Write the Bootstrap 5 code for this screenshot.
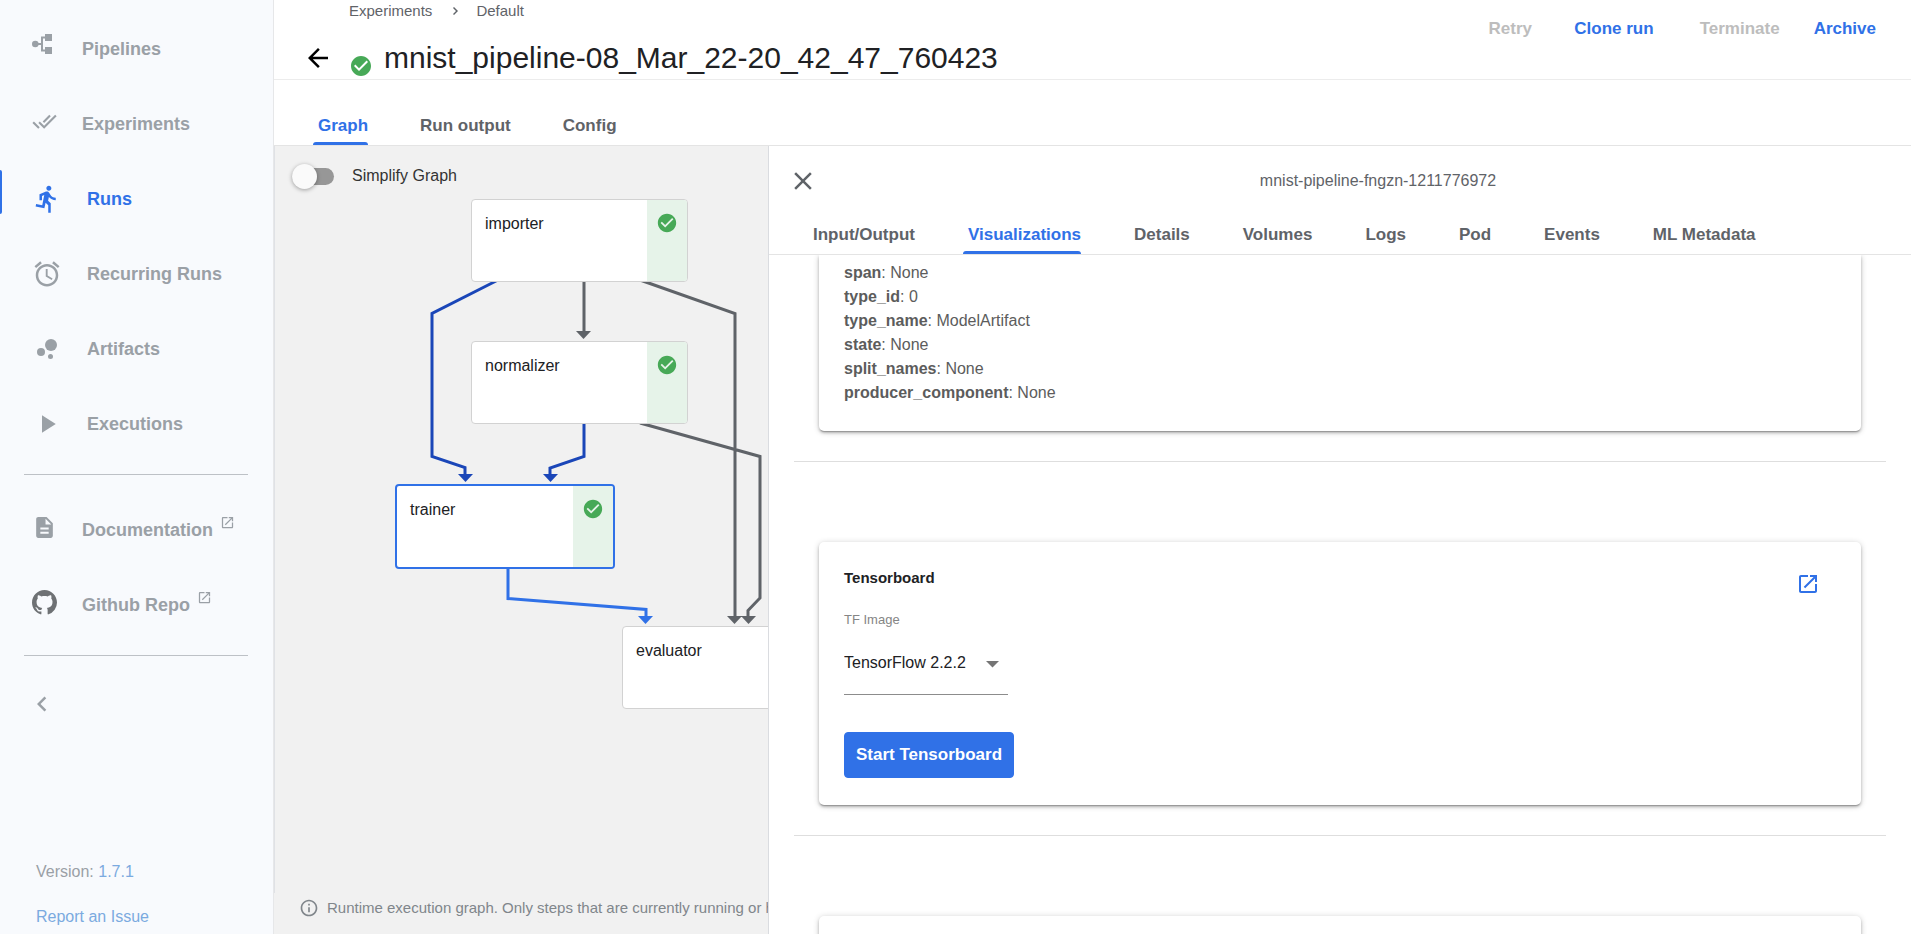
<!DOCTYPE html>
<html lang="en">
<head>
<meta charset="utf-8">
<meta name="viewport" content="width=device-width, initial-scale=1">
<title>Kubeflow Pipelines</title>
<link href="https://cdn.jsdelivr.net/npm/bootstrap@5.3.0/dist/css/bootstrap.min.css" rel="stylesheet">
<style>
  :root { --accent: #3071e7; --ink: #5f6368; --mute: #9aa0a6; --line: #e4e4e4; --ok: #47a957; }
  body { font-family: "Liberation Sans", Arial, sans-serif; font-size: 16px; line-height: 24px; color: #202124; }
  svg { display: block; flex: none; }
  .icon { fill: currentColor; }
  .ok-icon { fill: var(--ok); }

  /* side navigation */
  .side { width: 274px; background: #f8fafd; border-right: 1px solid #e6e7e9; padding-top: 11px; }
  .side-link { height: 75px; padding-left: 32px; gap: 25px; color: var(--mute); font-size: 18px; font-weight: 700; text-decoration: none; position: relative; }
  .side-link.active { color: var(--accent); }
  .side-link.active::before { content: ""; position: absolute; left: 0; top: 9px; width: 2px; height: 44px; background: var(--accent); border-radius: 0 2px 2px 0; }
  .side-link .raised { margin-bottom: 5px; }
  .side-link .ext { margin: 0 0 14px 7px; }
  .side-rule { border: 0; border-top: 1px solid #bdc1c6; opacity: 1; margin: 13px 25px 17px 24px; }
  .collapse-btn { margin: 16px 0 0 27px; color: var(--mute); }
  .side-foot { padding: 0 0 5px 36px; color: var(--mute); }
  .side-foot a { color: #7baae0; text-decoration: none; }
  .side-foot p { margin: 0 0 21px; }
  .side-foot p:last-child { margin: 0; }
  .plain-btn { border: 0; background: none; padding: 0; }

  /* page header */
  .top { height: 80px; border-bottom: 1px solid #ececec; }
  .crumbs { font-size: 15px; line-height: 22px; padding-left: 75px; gap: 14px; color: var(--ink); }
  .crumbs a { color: var(--ink); text-decoration: none; }
  .crumbs svg { margin-left: 4px; }
  .title-row { margin-top: 18px; height: 36px; padding-left: 29px; }
  .title-row h1 { font-size: 30px; line-height: 36px; margin: 0 0 0 12px; font-weight: 400; }
  .title-row .ok-icon { margin-left: 17px; }
  .actions { padding: 14px 25px 0 0; gap: 14px; }
  .action { border: 0; background: none; color: var(--accent); font-size: 17px; line-height: 30px; font-weight: 700; padding: 0 10px; min-width: 80px; }
  .action:disabled { color: #bdbdbd; }
  .action.spaced { margin-right: 12px; }

  /* tabs */
  .tab-row { border-bottom: 1px solid var(--line); }
  .tab-row.main-tabs { height: 66px; padding-left: 39px; gap: 47px; }
  .tab-row.pane-tabs { height: 39px; padding-left: 39px; gap: 48px; }
  .tab-item { border: 0; background: none; padding: 0 0 6px 5px; color: var(--ink); font-size: 17px; line-height: 26px; font-weight: 700; position: relative; white-space: nowrap; }
  .tab-item.active { color: var(--accent); }
  .tab-item.active::after { content: ""; position: absolute; left: 0; right: 0; bottom: 0; height: 3px; background: var(--accent); border-radius: 3px 3px 0 0; }

  /* graph */
  .graph { width: 494px; background: #f1f1f1; }
  .canvas { border-left: 1px solid #dfe1e5; position: relative; }
  .edges { position: absolute; left: 0; top: 0; fill: none; stroke-width: 3; }
  .simplify { padding: 18px 0 0 17px; gap: 18px; position: relative; }
  .simplify label { color: #333; }
  .simplify input { appearance: none; width: 42px; height: 17px; margin: 0; border-radius: 9px; background: #979797; position: relative; }
  .simplify input::before { content: ""; position: absolute; left: 0; top: -4px; width: 25px; height: 25px; border-radius: 50%; background: #fafafa; box-shadow: 0 1px 4px rgba(0,0,0,.35); }
  .step { position: absolute; width: 217px; height: 83px; background: #fff; border: 1px solid #d2d2d2; border-radius: 4px; display: flex; justify-content: space-between; padding: 0; text-align: left; overflow: hidden; color: #202124; }
  .step.chosen { width: 220px; height: 85px; border: 2px solid var(--accent); }
  .step .caption { padding: 12px 0 0 13px; }
  .step .state { width: 40px; background: #e6f3e9; display: flex; justify-content: center; padding-top: 12px; }
  .note { height: 41px; padding: 0 0 12px 25px; gap: 8px; color: #80868b; font-size: 15px; white-space: nowrap; overflow: hidden; }

  /* detail pane */
  .pane { border-left: 1px solid #dadce0; background: #fff; min-width: 0; }
  .pane-head { height: 70px; padding-bottom: 1px; color: var(--ink); }
  .pane-head .close-btn { width: 76px; padding-left: 19px; color: var(--ink); }
  .sheet { margin: 0 50px; padding: 25px; border-radius: 5px; background: #fff; box-shadow: 0 1px 6px rgba(0,0,0,.2), 0 2px 3px rgba(0,0,0,.2), 0 2px 1px -1px rgba(0,0,0,.2); }
  .sheet.cut { border-radius: 0 0 5px 5px; padding: 6px 25px 26px; color: #5c5c5c; }
  .sheet.upcoming { height: 120px; }
  .pane-rule { border: 0; border-top: 1px solid #dedede; opacity: 1; margin: 30px 25px 80px; }
  .sheet h2 { font-size: 15px; line-height: 22px; font-weight: 700; margin: 0; }
  .tf-label { font-size: 13px; line-height: 20px; color: #858585; margin-top: 21px; }
  .tf-select { width: 164px; height: 65px; border: 0; border-bottom: 1px solid #8c8c8c; background: none; appearance: none; color: #202124; outline: 0; padding: 2px 0 0; border-radius: 0; }
  .tf-wrap { position: relative; width: 164px; }
  .tf-wrap svg { position: absolute; right: 5px; top: 30px; pointer-events: none; color: #757575; }
  .start-btn { --bs-btn-bg: var(--accent); --bs-btn-border-color: var(--accent); width: 170px; height: 46px; padding: 0; font-size: 17px; font-weight: 700; border-radius: 4px; margin-top: 37px; margin-bottom: 2px; }
  .open-btn { color: var(--accent); margin: 5px 16px 0 0; }
</style>
</head>
<body>
<svg width="0" height="0" class="position-absolute" aria-hidden="true">
  <symbol id="i-ext" viewBox="0 0 24 24"><path d="M19 19H5V5h7V3H5c-1.110 0-2 .9-2 2v14c0 1.100.89 2 2 2h14c1.100 0 2-.9 2-2v-7h-2v7zM14 3v2h3.590l-9.830 9.830 1.410 1.410L19 6.410V10h2V3h-7z"/></symbol>
  <symbol id="i-check" viewBox="0 0 24 24"><path d="M12 2C6.480 2 2 6.480 2 12s4.480 10 10 10 10-4.480 10-10S17.520 2 12 2zm-2 15l-5-5 1.410-1.410L10 14.170l7.590-7.590L19 8l-9 9z"/></symbol>
</svg>
<div class="d-flex vh-100 overflow-hidden">
  <nav class="side d-flex flex-column flex-shrink-0" aria-label="Main">
    <a href="#" class="side-link d-flex align-items-center">
      <svg class="icon raised" width="25" height="25" viewBox="0 0 25 25"><circle cx="3.300" cy="10" r="3.300"/><path d="M13 0h7v7h-7zM13 13h7v7h-7z"/><path d="M5 10h5M14 3.500h-4v13h4" fill="none" stroke="currentColor" stroke-width="2"/></svg>
      Pipelines</a>
    <a href="#" class="side-link d-flex align-items-center">
      <svg class="icon raised" width="25" height="25" viewBox="0 0 24 24"><path d="M18 7l-1.410-1.410-6.340 6.340 1.410 1.410L18 7zm4.240-1.410L11.660 16.170 7.480 12l-1.410 1.410L11.660 19l12-12-1.420-1.410zM.41 13.410L6 19l1.410-1.410L1.830 12 .41 13.410z"/></svg>
      Experiments</a>
    <a href="#" class="side-link active d-flex align-items-center" aria-current="page">
      <svg class="icon" width="30" height="30" viewBox="0 0 24 24"><path d="M13.490 5.480c1.100 0 2-.9 2-2s-.9-2-2-2-2 .9-2 2 .9 2 2 2zm-3.600 13.900l1-4.400 2.100 2v6h2v-7.500l-2.100-2 .6-3c1.300 1.500 3.300 2.500 5.500 2.500v-2c-1.900 0-3.500-1-4.300-2.400l-1-1.600c-.4-.6-1-1-1.700-1-.3 0-.5.1-.8.1l-5.200 2.200v4.700h2v-3.400l1.800-.7-1.600 8.100-4.900-1-.4 2 7 1.400z"/></svg>
      Runs</a>
    <a href="#" class="side-link d-flex align-items-center">
      <svg class="icon" width="30" height="30" viewBox="0 0 24 24"><path d="M22 5.720l-4.600-3.860-1.290 1.530 4.600 3.860L22 5.720zM7.880 3.390L6.600 1.860 2 5.710l1.290 1.530 4.590-3.850zM12.500 8H11v6l4.750 2.850.75-1.230-4-2.370V8zM12 4c-4.970 0-9 4.030-9 9s4.020 9 9 9c4.970 0 9-4.030 9-9s-4.030-9-9-9zm0 16c-3.870 0-7-3.130-7-7s3.130-7 7-7 7 3.130 7 7-3.130 7-7 7z"/></svg>
      Recurring Runs</a>
    <a href="#" class="side-link d-flex align-items-center">
      <svg class="icon" width="30" height="30" viewBox="0 0 24 24"><circle cx="7.200" cy="14.400" r="3.200"/><circle cx="14.800" cy="18" r="2"/><circle cx="15.200" cy="8.800" r="4.800"/></svg>
      Artifacts</a>
    <a href="#" class="side-link d-flex align-items-center">
      <svg class="icon" width="30" height="30" viewBox="0 0 24 24"><path d="M8 5v14l11-7z"/></svg>
      Executions</a>
    <hr class="side-rule">
    <a href="#" class="side-link d-flex align-items-center">
      <svg class="icon raised" width="25" height="25" viewBox="0 0 24 24"><path d="M14 2H6c-1.100 0-1.990.9-1.990 2L4 20c0 1.100.89 2 1.990 2H18c1.100 0 2-.9 2-2V8l-6-6zm2 16H8v-2h8v2zm0-4H8v-2h8v2zm-3-5V3.500L18.500 9H13z"/></svg>
      <span class="d-flex align-items-center">Documentation<svg class="icon ext" width="15" height="15"><use href="#i-ext"/></svg></span></a>
    <a href="#" class="side-link d-flex align-items-center">
      <svg class="raised" width="25" height="25" viewBox="0 0 16 16" fill="#6e7174"><path d="M8 0C3.580 0 0 3.580 0 8c0 3.540 2.290 6.530 5.470 7.590.4.070.55-.17.55-.38 0-.19-.01-.82-.01-1.490-2.010.37-2.530-.49-2.690-.94-.09-.23-.48-.94-.82-1.130-.28-.15-.68-.52-.01-.53.63-.01 1.080.58 1.230.82.72 1.210 1.870.87 2.330.66.07-.52.28-.87.51-1.070-1.780-.2-3.640-.89-3.640-3.950 0-.87.31-1.590.82-2.150-.08-.2-.36-1.020.08-2.120 0 0 .67-.21 2.200.82.64-.18 1.320-.27 2-.27s1.360.09 2 .27c1.530-1.040 2.200-.82 2.200-.82.44 1.100.16 1.920.08 2.120.51.56.82 1.270.82 2.150 0 3.070-1.870 3.750-3.650 3.950.29.25.54.73.54 1.480 0 1.070-.01 1.930-.01 2.200 0 .21.15.46.55.38A8.010 8.010 0 0 0 16 8c0-4.420-3.580-8-8-8z"/></svg>
      <span class="d-flex align-items-center">Github Repo<svg class="icon ext" width="15" height="15"><use href="#i-ext"/></svg></span></a>
    <hr class="side-rule">
    <button type="button" class="plain-btn collapse-btn align-self-start" aria-label="Collapse menu">
      <svg class="icon" width="30" height="30" viewBox="0 0 24 24"><path d="M15.410 7.410L14 6l-6 6 6 6 1.410-1.410L10.830 12z"/></svg></button>
    <div class="side-foot mt-auto">
      <p>Version: <a href="#">1.7.1</a></p>
      <p><a href="#">Report an Issue</a></p>
    </div>
  </nav>

  <main class="d-flex flex-column flex-fill overflow-hidden">
    <header class="top d-flex justify-content-between flex-shrink-0">
      <div>
        <nav class="crumbs d-flex align-items-center" aria-label="Breadcrumb">
          <a href="#">Experiments</a>
          <svg class="icon" width="12" height="12" viewBox="6 6 12 12"><path d="M10 8l-1 1 3 3-3 3 1 1 4-4z"/></svg>
          <a href="#">Default</a>
        </nav>
        <div class="title-row d-flex">
          <button type="button" class="plain-btn" aria-label="Back"><svg width="30" height="30" viewBox="0 0 24 24"><path d="M20 11H7.830l5.590-5.590L12 4l-8 8 8 8 1.410-1.410L7.830 13H20v-2z"/></svg></button>
          <svg class="ok-icon align-self-end" width="22" height="21" viewBox="1 1 22 21"><use href="#i-check" width="24" height="24"/></svg>
          <h1>mnist_pipeline-08_Mar_22-20_42_47_760423</h1>
        </div>
      </div>
      <div class="actions d-flex align-items-start">
        <button type="button" class="action" disabled>Retry</button>
        <button type="button" class="action spaced">Clone run</button>
        <button type="button" class="action" disabled>Terminate</button>
        <button type="button" class="action">Archive</button>
      </div>
    </header>

    <div class="tab-row main-tabs d-flex align-items-end flex-shrink-0" role="tablist">
      <button type="button" class="tab-item active" role="tab" aria-selected="true">Graph</button>
      <button type="button" class="tab-item" role="tab">Run output</button>
      <button type="button" class="tab-item" role="tab">Config</button>
    </div>

    <div class="d-flex flex-fill overflow-hidden">
      <section class="graph d-flex flex-column flex-shrink-0" aria-label="Run graph">
        <div class="canvas flex-grow-1 overflow-hidden">
          <svg class="edges" width="493" height="600" viewBox="275 146 493 600">
            <g stroke="#1a46b8">
              <path d="M498 280L432 313.500V456.500L465 467.500V476"/><path d="M584 424V456.500L550 468V476"/>
              <path d="M458 474h15l-7.500 8zM543 474h15l-7.500 8z" fill="#1a46b8" stroke="none"/>
            </g>
            <g stroke="#5f6368">
              <path d="M584 281V333M640 280L735 313.500V618M640 423L760 456.500V598L748 610.500V618"/>
              <path d="M576 331h15l-7.500 8zM727 616h15l-7.500 8zM741 616h15l-7.500 8z" fill="#5f6368" stroke="none"/>
            </g>
            <g stroke="#3071e7">
              <path d="M508 568V598.500L646 609.500V618"/>
              <path d="M638 616h15l-7.500 8z" fill="#3071e7" stroke="none"/>
            </g>
          </svg>
          <div class="simplify d-flex align-items-center">
            <input type="checkbox" role="switch" id="simplify"><label for="simplify">Simplify Graph</label>
          </div>
          <button type="button" class="step" style="left:196px;top:53px"><span class="caption">importer</span><span class="state"><svg class="ok-icon" width="22" height="22"><use href="#i-check"/></svg></span></button>
          <button type="button" class="step" style="left:196px;top:195px"><span class="caption">normalizer</span><span class="state"><svg class="ok-icon" width="22" height="22"><use href="#i-check"/></svg></span></button>
          <button type="button" class="step chosen" style="left:120px;top:338px"><span class="caption">trainer</span><span class="state"><svg class="ok-icon" width="22" height="22"><use href="#i-check"/></svg></span></button>
          <button type="button" class="step" style="left:347px;top:480px"><span class="caption">evaluator</span><span class="state"></span></button>
        </div>
        <div class="note d-flex align-items-center">
          <svg class="icon" width="20" height="20" viewBox="0 0 24 24"><path d="M11 17h2v-6h-2v6zm1-15C6.480 2 2 6.480 2 12s4.480 10 10 10 10-4.480 10-10S17.520 2 12 2zm0 18c-4.410 0-8-3.590-8-8s3.590-8 8-8 8 3.590 8 8-3.590 8-8 8zM11 9h2V7h-2v2z"/></svg>
          <span>Runtime execution graph. Only steps that are currently running or have already completed are shown.</span>
        </div>
      </section>

      <section class="pane d-flex flex-column flex-grow-1" aria-label="Step details">
        <div class="pane-head d-flex align-items-center flex-shrink-0">
          <button type="button" class="plain-btn close-btn" aria-label="Close"><svg class="icon" width="30" height="30" viewBox="0 0 24 24"><path d="M19 6.410L17.590 5 12 10.590 6.410 5 5 6.410 10.590 12 5 17.590 6.410 19 12 13.410 17.590 19 19 17.590 13.410 12z"/></svg></button>
          <div class="flex-grow-1 text-center">mnist-pipeline-fngzn-1211776972</div>
        </div>
        <div class="tab-row pane-tabs d-flex align-items-end flex-shrink-0" role="tablist">
          <button type="button" class="tab-item" role="tab">Input/Output</button>
          <button type="button" class="tab-item active" role="tab" aria-selected="true">Visualizations</button>
          <button type="button" class="tab-item" role="tab">Details</button>
          <button type="button" class="tab-item" role="tab">Volumes</button>
          <button type="button" class="tab-item" role="tab">Logs</button>
          <button type="button" class="tab-item" role="tab">Pod</button>
          <button type="button" class="tab-item" role="tab">Events</button>
          <button type="button" class="tab-item" role="tab">ML Metadata</button>
        </div>
        <div class="flex-grow-1 overflow-hidden">
          <div class="sheet cut">
            <div><b>span</b>: None</div>
            <div><b>type_id</b>: 0</div>
            <div><b>type_name</b>: ModelArtifact</div>
            <div><b>state</b>: None</div>
            <div><b>split_names</b>: None</div>
            <div><b>producer_component</b>: None</div>
          </div>
          <hr class="pane-rule">
          <div class="sheet d-flex justify-content-between align-items-start">
            <div>
              <h2>Tensorboard</h2>
              <label class="tf-label d-block" for="tf-image">TF Image</label>
              <div class="tf-wrap">
                <select id="tf-image" class="tf-select"><option>TensorFlow 2.2.2</option></select>
                <svg class="icon" width="20" height="10" viewBox="0 0 20 10"><path d="M3 1h13L9.500 7.500z"/></svg>
              </div>
              <button type="button" class="btn btn-primary start-btn">Start Tensorboard</button>
            </div>
            <a href="#" class="open-btn" aria-label="Open in new tab"><svg class="icon" width="24" height="24"><use href="#i-ext"/></svg></a>
          </div>
          <hr class="pane-rule">
          <div class="sheet upcoming"></div>
        </div>
      </section>
    </div>
  </main>
</div>
<script src="https://cdn.jsdelivr.net/npm/bootstrap@5.3.0/dist/js/bootstrap.bundle.min.js"></script>
</body>
</html>
